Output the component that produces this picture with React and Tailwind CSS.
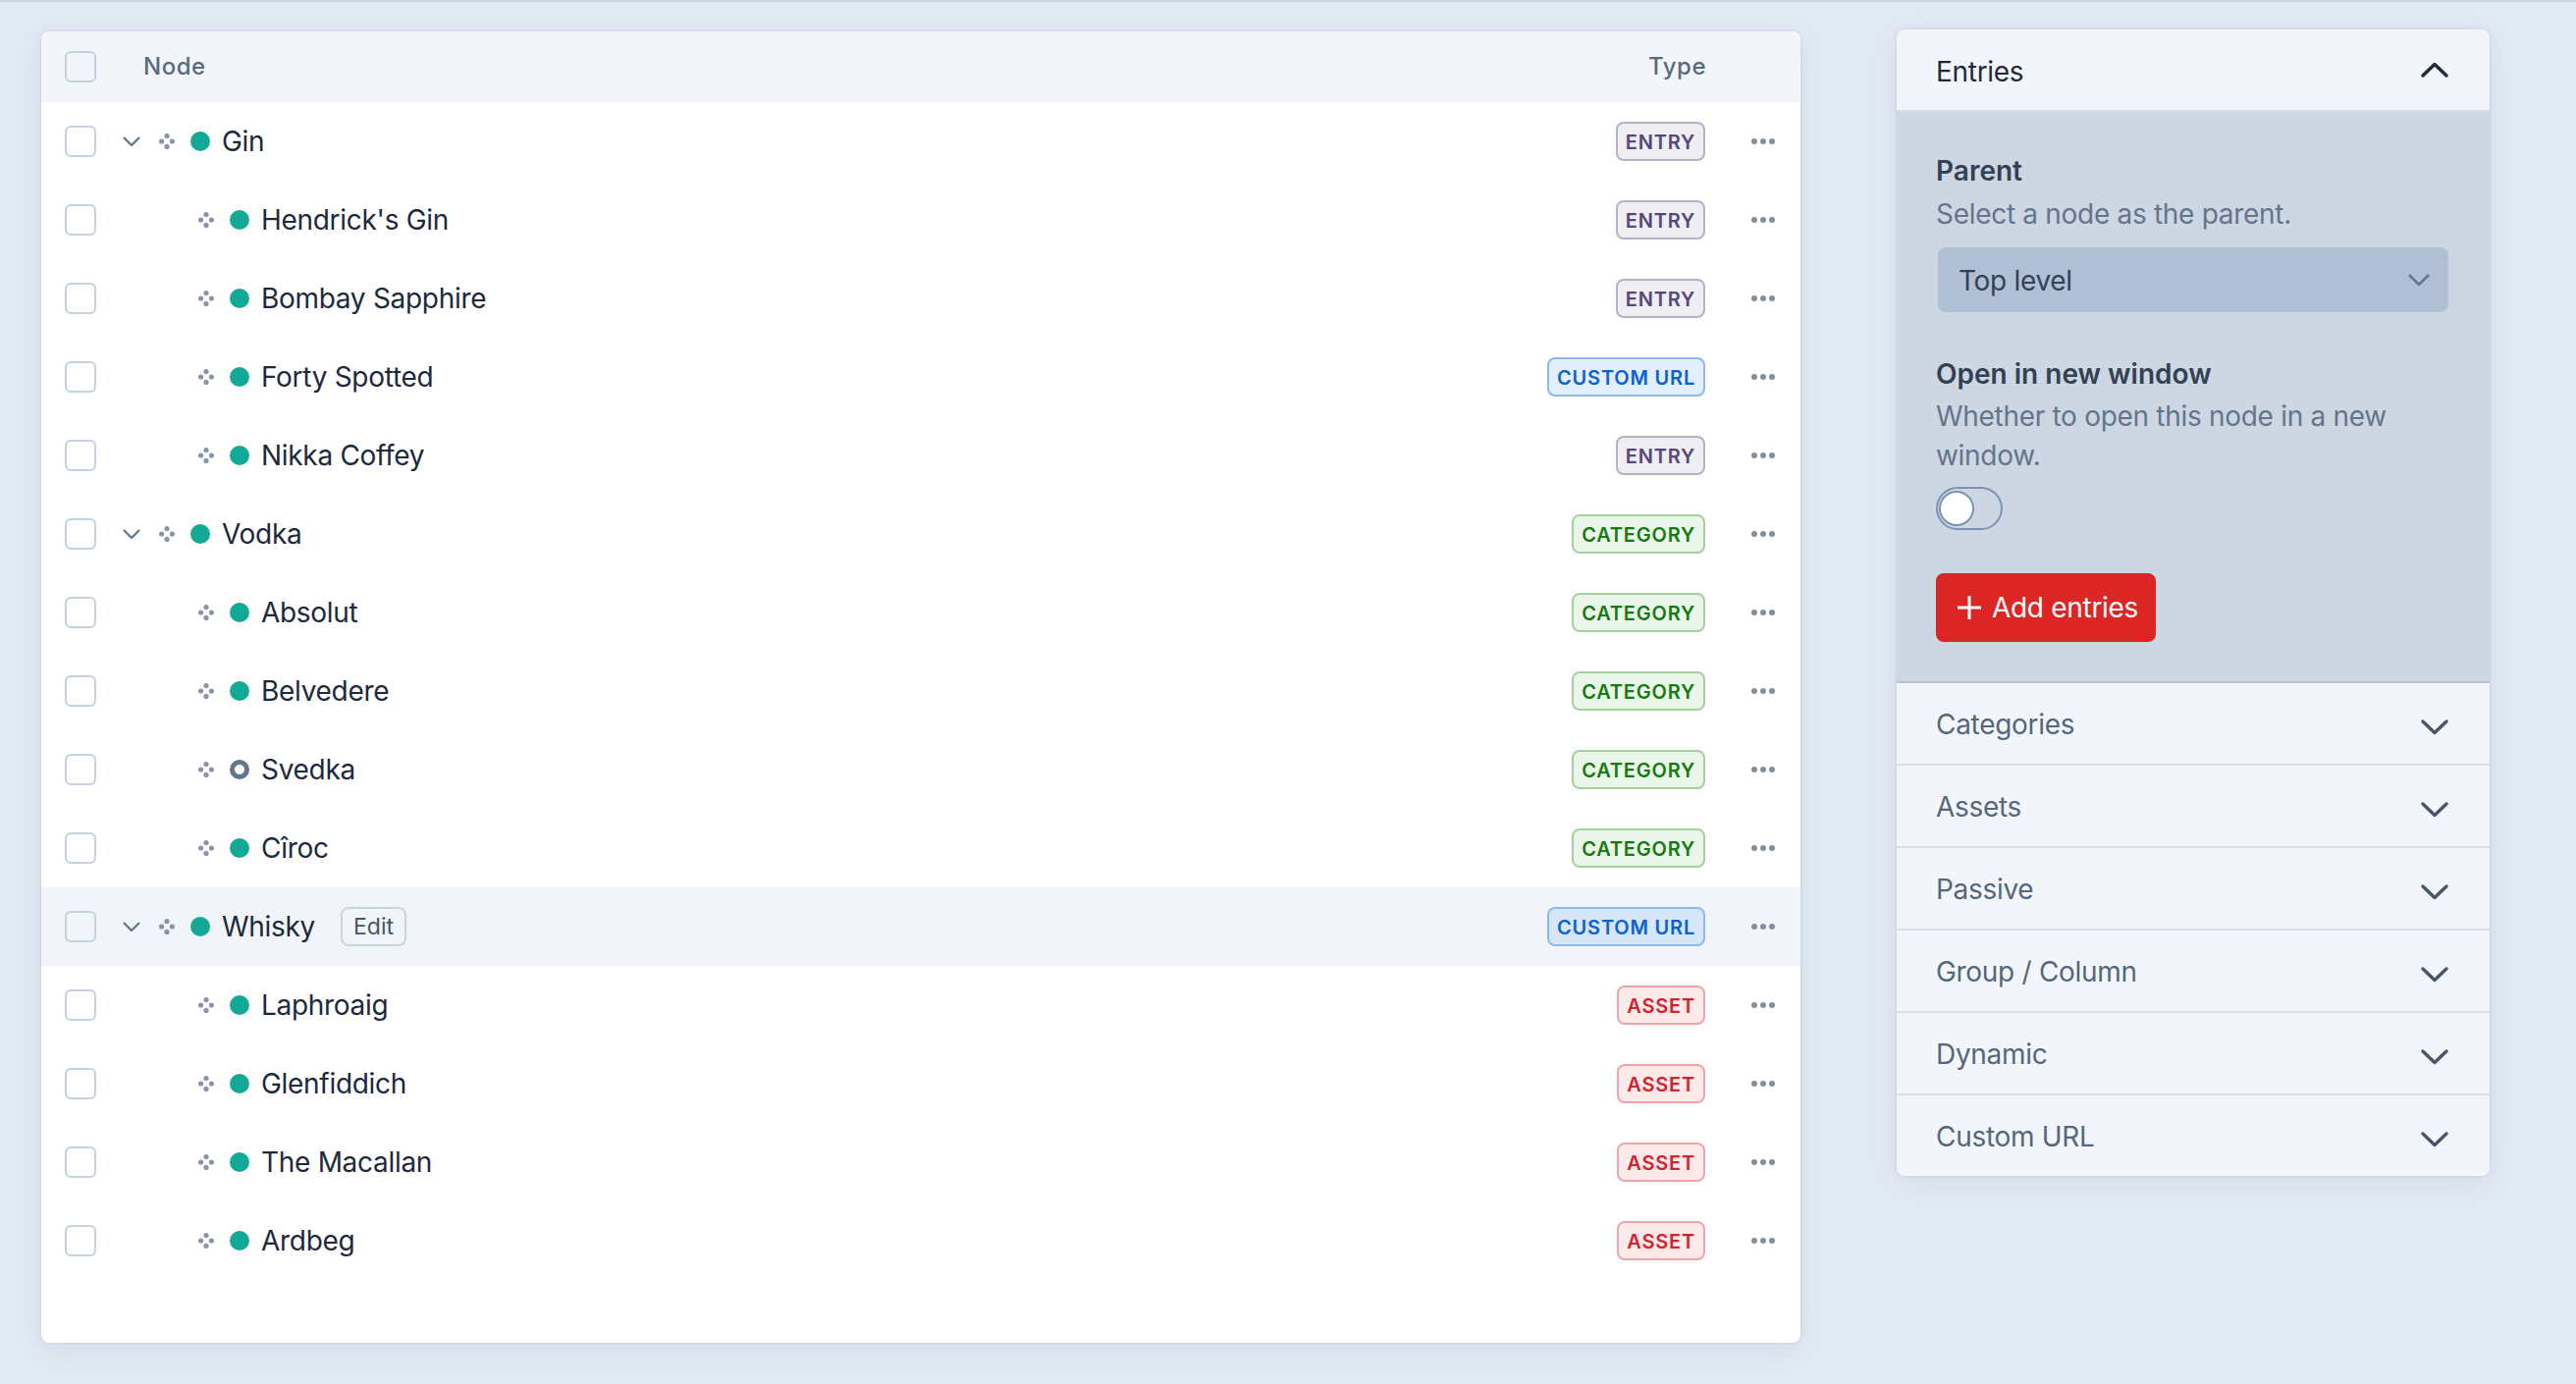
const rows = [
  { name: "Gin", type: "entry", parent: true },
  { name: "Hendrick's Gin", type: "entry" },
  { name: "Bombay Sapphire", type: "entry" },
  { name: "Forty Spotted", type: "url" },
  { name: "Nikka Coffey", type: "entry" },
  { name: "Vodka", type: "category", parent: true },
  { name: "Absolut", type: "category" },
  { name: "Belvedere", type: "category" },
  { name: "Svedka", type: "category", off: true },
  { name: "Cîroc", type: "category" },
  { name: "Whisky", type: "url", parent: true, hover: true },
  { name: "Laphroaig", type: "asset" },
  { name: "Glenfiddich", type: "asset" },
  { name: "The Macallan", type: "asset" },
  { name: "Ardbeg", type: "asset" },
];

const badges = {
  entry: { label: "Entry", cls: "border-[#b7afc4] bg-[#5b4a82]/10 text-[#56487a]" },
  url: { label: "Custom URL", cls: "border-[#8db9ee] bg-[#3b8fe8]/15 text-[#0b63ce]" },
  category: { label: "Category", cls: "border-[#a3d0a0] bg-[#3fa53a]/10 text-[#167a12]" },
  asset: { label: "Asset", cls: "border-[#eea3aa] bg-[#e0323f]/10 text-[#cf2530]" },
};

const sections = ["Categories", "Assets", "Passive", "Group / Column", "Dynamic", "Custom URL"];

const cardShadow =
  "shadow-[0_0_2px_1px_rgba(100,116,139,0.12),0_6px_30px_rgba(100,116,139,0.12)]";

const Checkbox = () => (
  <span className="size-8 shrink-0 rounded-md border-2 border-[#c5d1e0]" />
);

const DragIcon = () => (
  <svg viewBox="0 0 16 16" className="size-4 shrink-0 fill-[#8a94a6]">
    <circle cx="8" cy="2.6" r="2.6" />
    <circle cx="2.6" cy="8" r="2.6" />
    <circle cx="13.4" cy="8" r="2.6" />
    <circle cx="8" cy="13.4" r="2.6" />
  </svg>
);

const MoreIcon = () => (
  <svg viewBox="0 0 24 6" className="ml-[47px] h-[6px] w-6 shrink-0 fill-[#868f9e]">
    <circle cx="3" cy="3" r="3" />
    <circle cx="12" cy="3" r="3" />
    <circle cx="21" cy="3" r="3" />
  </svg>
);

const BigChevron = ({ up, className }) => (
  <svg
    viewBox="0 0 28 16"
    className={`h-4 w-7 shrink-0 fill-none stroke-[3.4] ${className}`}
    strokeLinecap="round"
    strokeLinejoin="round"
  >
    <path d={up ? "M2 14L14 2.5 26 14" : "M2 2l12 11.5L26 2"} />
  </svg>
);

const Badge = ({ type }) => {
  const badge = badges[type];
  return (
    <span
      className={`flex h-10 items-center rounded-lg border-2 px-2 pt-[1px] text-[20px] font-semibold tracking-[0.8px] uppercase ${badge.cls}`}
    >
      {badge.label}
    </span>
  );
};

const Row = ({ row }) => (
  <div className={`flex h-20 items-center pr-[26px] pl-6 ${row.hover ? "bg-[#f1f5fa]" : ""}`}>
    <Checkbox />
    {row.parent ? (
      <svg
        viewBox="0 0 18 10"
        className="mr-[19px] ml-[27px] h-[10px] w-[18px] shrink-0 fill-none stroke-[#64748b] stroke-[2.2]"
      >
        <path d="M1 1l8 8 8-8" />
      </svg>
    ) : (
      <span className="w-[104px] shrink-0" />
    )}
    <DragIcon />
    {row.off ? (
      <span className="ml-4 size-5 shrink-0 rounded-full border-[5px] border-[#64748b]" />
    ) : (
      <span className="ml-4 size-5 shrink-0 rounded-full bg-[#13a996]" />
    )}
    <span className="ml-3 text-[28px] text-[#1e293b]">{row.name}</span>
    {row.hover && (
      <span className="ml-[26px] flex h-10 w-[67px] items-center justify-center rounded-lg border-2 border-[#cbd5e1] text-[23px] tracking-normal text-[#475569]">
        Edit
      </span>
    )}
    <span className="ml-auto">
      <Badge type={row.type} />
    </span>
    <MoreIcon />
  </div>
);

const Section = ({ title }) => (
  <div className="flex h-[84px] items-center justify-between border-b-2 border-[#d9dfe7] pr-[42px] pl-10 text-[28px] text-[#56667b] last:h-[82px] last:border-b-0">
    <span className="pt-[2px]">{title}</span>
    <BigChevron className="mt-[7px] stroke-[#475569]" />
  </div>
);

export default function App() {
  return (
    <div className="flex min-h-[1410px] items-start border-t-2 border-[#cdd7e3] bg-[#e2eaf4] font-['Inter',sans-serif] tracking-[-0.3px]">
      <div className={`mt-[30px] ml-[42px] w-[1792px] overflow-hidden rounded-lg bg-white pb-16 ${cardShadow}`}>
        <div className="flex h-[72px] items-center bg-[#f2f6fb] pr-24 pl-6 text-[24px] font-medium tracking-[0.5px] text-[#5a6a7e]">
          <Checkbox />
          <span className="ml-12">Node</span>
          <span className="ml-auto">Type</span>
        </div>
        {rows.map((row) => (
          <Row key={row.name} row={row} />
        ))}
      </div>

      <div className={`mt-[28px] ml-[98px] w-[604px] overflow-hidden rounded-lg bg-[#f2f6fb] ${cardShadow}`}>
        <div className="flex h-[84px] items-center justify-between border-b-2 border-[#d9dfe7] pr-[42px] pl-10 text-[28px] text-[#1e293b]">
          <span className="pt-[3px]">Entries</span>
          <BigChevron up className="stroke-[#1e293b]" />
        </div>
        <div className="border-b-2 border-[#b5c2d2] bg-[#cdd7e3] p-10 text-[28px]">
          <p className="leading-10 font-semibold tracking-normal text-[#334155]">Parent</p>
          <p className="mt-1 leading-10 text-[#64748b]">Select a node as the parent.</p>
          <div className="mt-[14px] ml-[2px] flex h-[66px] w-[520px] items-center justify-between rounded-lg bg-[#b0bfd3] pr-[19px] pl-[21px] text-[#334155]">
            <span className="pt-[1px]">Top level</span>
            <svg viewBox="0 0 22 12" className="h-3 w-[22px] fill-none stroke-[#64748b] stroke-[2.5]">
              <path d="M1 1l10 10 10-10" />
            </svg>
          </div>
          <p className="mt-[43px] leading-10 font-semibold tracking-normal text-[#334155]">Open in new window</p>
          <p className="mt-[3px] leading-10 text-[#64748b]">Whether to open this node in a new window.</p>
          <div className="mt-3 flex h-[44px] w-[68px] items-center rounded-full border-2 border-[#7b93b4] pl-[1px]">
            <span className="size-9 rounded-full border-2 border-[#7b93b4] bg-white" />
          </div>
          <button className="mt-[44px] flex h-[70px] w-[224px] items-center gap-[11px] rounded-lg bg-[#dc2626] pl-[22px] text-white">
            <svg viewBox="0 0 24 24" className="size-6 fill-none stroke-white stroke-[3]">
              <path d="M12 0v24M0 12h24" />
            </svg>
            Add entries
          </button>
        </div>
        {sections.map((title) => (
          <Section key={title} title={title} />
        ))}
      </div>
    </div>
  );
}
